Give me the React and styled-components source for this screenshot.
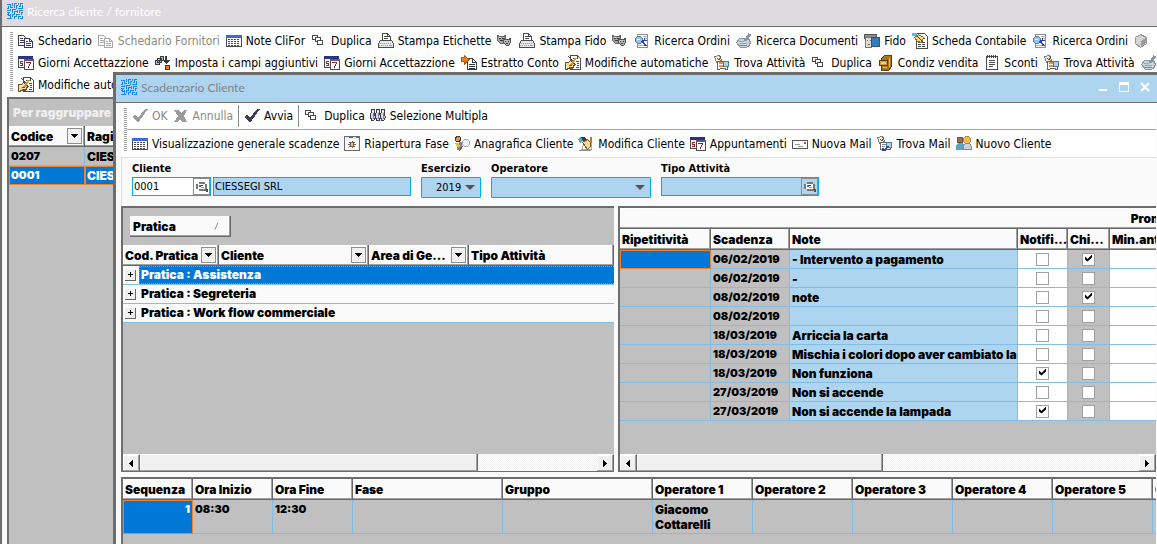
import React from "react";
import styled, { createGlobalStyle } from "styled-components";

const ui = `"DejaVu Sans Condensed", "DejaVu Sans", sans-serif`;
const titleFont = `400 12px Lato, "Open Sans", sans-serif`;
const gridFont = `900 12px/15px Inter, sans-serif`;

const shapes = {
  logo: (
    <path
      stroke="#1688e6"
      d="M0 1.5h4M5.5 0v3M1.5 3v3M0 5.5h2M3.5 1v4M3 4.5h3M7.5 1v4M7 .5h3M9.5 2v4M9 2.5h2M11.5 0v2M13 .5h3M13.5 0v4M12 3.5h2M15.5 2v4M11 5.5h5M0 7.5h4M3.5 6v2M5.5 6v4M5 6.5h4M7.5 8v3M7 8.5h4M10.5 7v3M12 7.5h4M12.5 7v3M14.5 9v3M14 9.5h2M0 9.5h3M1.5 9v4M1 12.5h3M3.5 11v4M0 15.5h5M5.5 11v3M5 11.5h3M7.5 13v3M7 13.5h3M9.5 11v3M9 11.5h4M11.5 13v3M11 13.5h3M13 15.5h3M15.5 13v3M0 11.5h1"
    />
  ),
  copy: (
    <>
      <path fill="#fff" stroke="#3c3c3c" d="M.5 2.5h5l3 3v7h-8z" />
      <path stroke="#3c3c3c" d="M2 5.5h3M2 7.5h4M2 9.5h4" />
      <path fill="#fff" stroke="#34347a" d="M6.5 5.5h5l3 3v6h-8z" />
      <path stroke="#34347a" d="M11.5 5v3M11 8.5h4M8 8.5h2M8 10.5h5M8 12.5h5" />
    </>
  ),
  copyOff: (
    <>
      <path fill="#fff" stroke="#a8a8a8" d="M.5 2.5h5l3 3v7h-8z" />
      <path stroke="#a8a8a8" d="M2 5.5h3M2 7.5h4M2 9.5h4" />
      <path fill="#fff" stroke="#a8a8a8" d="M6.5 5.5h5l3 3v6h-8z" />
      <path stroke="#a8a8a8" d="M11.5 5v3M11 8.5h4M8 8.5h2M8 10.5h5M8 12.5h5" />
    </>
  ),
  table: (
    <>
      <path fill="#fff" stroke="#4a4a4a" d="M.5 3.5h15v10h-15z" />
      <path fill="#3f68d8" d="M0 2h16v3H0z" />
      <path
        stroke="#4a4a4a"
        strokeDasharray="2 1"
        d="M2 6.5h12M2 8.5h12M2 10.5h12M2 12.5h12"
      />
    </>
  ),
  dup: (
    <>
      <path fill="#fff" stroke="#4a4a4a" d="M1.5 2.5h5v4h-5z" />
      <path fill="#fff" stroke="#4a4a4a" d="M4.5 4.5h5v4h-5z" />
      <path fill="#fff" stroke="#4a4a4a" d="M6.5 7.5h5v4h-5z" />
    </>
  ),
  printer: (
    <>
      <path fill="#fff" stroke="#4a4a4a" d="M4.5 7.5v-7h5l3 3v4z" />
      <path stroke="#4a4a4a" d="M6 3.5h3M6 5.5h4M9.5 1v3M9 3.5h3" />
      <path fill="#e8e8e8" stroke="#4a4a4a" d="M2.5 7.5h11l2 3v4H.5v-4z" />
      <path stroke="#9a9a9a" strokeDasharray="1 1" d="M2 10.5h12M1 12.5h11" />
      <path stroke="#f08a3c" d="M12 12.5h2" />
      <path stroke="#4a4a4a" d="M0 14.5h16" />
    </>
  ),
  masks: (
    <>
      <path fill="#a2a2a2" stroke="#6a6a6a" d="M.5 2.5l2 1h4l2-1v6l-2 2h-3l-3-3z" />
      <path fill="#b4b4b4" stroke="#555" d="M6.5 5.5l2 1h3l2-1v4l-2 3h-2l-3-3z" />
      <path stroke="#3a3a3a" d="M2 5.5h2M5 5.5h1M3 7.5h3M8 8.5h1M11 8.5h1M9 10.5h2" />
      <path stroke="#ddd" d="M2 4.5h2M8 7.5h1" />
    </>
  ),
  search: (
    <>
      <path fill="#fff" stroke="#8e8e8e" d="M3.5 1.5h10v13h-10z" />
      <path stroke="#b0b0b0" d="M9 3.5h4M10 5.5h3M4 12.5h6" />
      <circle cx="5" cy="7" r="3.5" fill="#8fc5ea" stroke="#6b7b88" />
      <path stroke="#2d3fa8" strokeWidth="2" d="M8 8l4 5" />
      <path stroke="#2d3fa8" d="M8 7.5h5M10.5 5v3" />
      <path stroke="#fff" d="M3 6.5h3" />
    </>
  ),
  scan: (
    <>
      <path fill="#c9d3da" stroke="#8b959c" d="M.5 9.5l3-4h9l2 4-2 4-3 1h-5z" />
      <path stroke="#8497a5" strokeWidth="3" d="M9 8l5-7" />
      <path stroke="#7ab0d4" d="M4 10.5h7M3 8.5h5" />
      <path stroke="#80888e" d="M3 12.5h8" />
    </>
  ),
  wallet: (
    <>
      <path fill="#8c8c8c" stroke="#555" d="M.5 1.5h12v4h-12z" />
      <path fill="#e2ddd0" stroke="#777" d="M1.5 4.5h6v10h-6z" />
      <path stroke="#5a6c78" d="M3 7.5h1M6 7.5h1M4 11.5h2" />
      <path fill="#3679b8" stroke="#28557f" d="M7.5 4.5h8v9h-8z" />
    </>
  ),
  sheet: (
    <>
      <path fill="#fff" stroke="#4a4a4a" d="M4.5.5h8l3 3v12h-11z" />
      <path
        stroke="#4a4a4a"
        strokeDasharray="3 1"
        d="M10 5.5h4M6 9.5h8M6 11.5h8M6 13.5h8"
      />
      <path fill="#58b9e8" d="M0 0h5v3H0z" />
      <path fill="#f4d78e" stroke="#8b6f31" d="M2.5 4.5l4-3 5 3-2 5-4-1z" />
      <path stroke="#4a4a4a" d="M5 3l6 6" />
    </>
  ),
  cube: (
    <>
      <path fill="#d3d3d3" stroke="#999" d="M6.5 1.5l6 3v6l-6 4-5-4v-6z" />
      <path fill="#9b9b9b" d="M7 8l5-3v5l-5 4z" />
    </>
  ),
  calendar: (
    <>
      <path fill="#f5f5f5" stroke="#4a4a4a" d="M.5 1.5h14v11H.5z" />
      <path fill="#2c3180" d="M0 1h15v3H0z" />
      <path stroke="#a02828" d="M2 6.5h3M2 8.5h3M2 10.5h3M2.5 6v3M4.5 8v3" />
      <path fill="#fff" stroke="#4a4a4a" d="M6.5 4.5h9v10h-9z" />
      <path fill="#5a5c78" d="M6 4h10v2H6z" />
      <path stroke="#922424" d="M8 7.5h5M12.5 7v2M11.5 9v2M10.5 11v2" />
    </>
  ),
  fields: (
    <>
      <path fill="#8ad2f5" stroke="#3a3a3a" d="M.5 5.5h4v4h-4zM2.5 3.5h4v4h-4zM5.5 1.5h3v4h-3z" />
      <path fill="#3a3a3a" d="M10 1h2v4h3l-4 4-4-4h3z" />
      <path fill="#f07a22" stroke="#3a3a3a" d="M10.5 10.5h4v4h-4z" />
    </>
  ),
  exportDoc: (
    <>
      <path fill="#fff" stroke="#3c3c3c" d="M6.5 3.5h5l4 4v7h-9z" />
      <path stroke="#3c3c3c" d="M11.5 4v4M11 7.5h4M8 9.5h6M8 11.5h6M8 13.5h6" />
      <path fill="#f58220" stroke="#a85b22" d="M0 2.5h3v-2l5 4-5 5v-3H0z" />
    </>
  ),
  edit: (
    <>
      <path fill="#fff" stroke="#4a4a4a" d="M5.5.5h7l3 3v11h-10z" />
      <path stroke="#4a4a4a" d="M12.5 1v3M8 3.5h2M11 6.5h3M12 8.5h2M12 10.5h2M11 12.5h3M3 1l8 9" />
      <path fill="#f6dfa4" stroke="#675325" d="M.5 7.5h3l2-2 3 2 1 2-2 4h-3l-4 1z" />
      <path stroke="#d89a3a" strokeWidth="2" d="M11 3l-5 7" />
      <path stroke="#675325" d="M4 10.5h3M4 12.5h3" />
    </>
  ),
  findTask: (
    <>
      <path fill="#f8f0d8" stroke="#7b7b7b" d="M.5 1.5l5-1 2 5-5 2z" />
      <path stroke="#555" d="M3 3l2 2 2-4" />
      <path fill="#fff" stroke="#666" d="M3.5 6.5h10v8l-4-1-6 1z" />
      <path stroke="#f08a3c" strokeWidth="2" d="M5 8h4M5 11h5" />
      <circle cx="12" cy="9" r="3" fill="#a5d5ef" stroke="#56788c" />
    </>
  ),
  cabinet: (
    <>
      <path fill="#a9741d" stroke="#5d4011" d="M3.5 3.5l3-3h7v11l-3 4h-7z" />
      <path fill="#d29a35" stroke="#5d4011" d="M1.5 5.5h8v5h-8z" />
      <path fill="#f1cf7d" d="M3 7h5v2H3z" />
      <path stroke="#e3bd6c" d="M5 12.5h4M11.5 3v9" />
    </>
  ),
  notepad: (
    <>
      <path fill="#fff" stroke="#4a4a4a" d="M2.5 1.5h11v13h-11z" />
      <path stroke="#4a4a4a" strokeDasharray="1 1" d="M3 .5h10M3 2.5h10" />
      <path stroke="#4a4a4a" d="M5 5.5h6M5 7.5h6M5 9.5h6M5 11.5h4" />
    </>
  ),
  okOff: <path fill="#9c9c9c" d="M0 9l3-2 3 3 7-9h3L6 15z" />,
  cancelOff: (
    <path fill="#9c9c9c" d="M1 2h5l2 3 3-3h3l-3 6 3 6h-5l-2-3-3 3H1l4-6z" />
  ),
  go: (
    <>
      <path fill="#3e3e4e" d="M0 9l3-2 3 3 7-9h3L6 15z" />
      <path stroke="#34347a" d="M4 12l2 2 5-7" />
    </>
  ),
  people: (
    <>
      <path fill="#d6d6dc" stroke="#3c3c50" d="M1.5 1.5h3v4l1 4-2 3h-2l-1-4zM6.5 1.5h3v4l1 3-1 4h-3l-1-4zM11.5 1.5h3v4l1 4-2 3h-2l-1-4z" />
      <path stroke="#8080b0" d="M3.5 5v6M8.5 5v6M13.5 5v6" />
      <path stroke="#fff" d="M2 3.5h2M7 3.5h2M12 3.5h2" />
    </>
  ),
  gearWindow: (
    <>
      <path fill="#fafafa" stroke="#6a6a6a" d="M.5.5h15v14H.5z" />
      <path fill="#e4edf8" d="M1 1h14v2H1z" />
      <path stroke="#356bd8" d="M5 1.5h4M12 1.5h3" />
      <path fill="#e6c98c" stroke="#6b6258" d="M6.5 6.5h3v4h-3z" />
      <path stroke="#6b6258" d="M8 5v1M8 11v1M4 8.5h2M10 8.5h2M5 6.5h1M10 6.5h1M5 10.5h1M10 10.5h1" />
    </>
  ),
  person: (
    <>
      <circle cx="4" cy="3" r="2.5" fill="#d79a5b" stroke="#4a3b34" />
      <path fill="#e4c33f" d="M1 7h5l2 4-4 1z" />
      <path fill="#7d80b0" d="M5 6h3v5H6zM3 11h4v3H3z" />
      <circle cx="12" cy="7" r="3.5" fill="#f0f3f5" stroke="#a7a7a7" />
      <path stroke="#7e4a2f" d="M9 10l-4 5" />
    </>
  ),
  editClient: (
    <>
      <path fill="#fff" stroke="#aaa" d="M6.5 5.5h7v8H4z" />
      <path fill="#3a3a3a" d="M2 1h4l3 3-4 2z" />
      <path fill="#46a9c8" d="M0 3l3-2 2 4-3 2z" />
      <path fill="#f4d99c" stroke="#725729" d="M4.5 6.5l5-3 3 3v4l-3 3z" />
      <path stroke="#c0762c" strokeWidth="2" d="M13 1v6" />
      <path stroke="#8a8a8a" d="M1 14.5h12" />
    </>
  ),
  mail: (
    <>
      <path fill="#fff" stroke="#555" d="M.5 4.5h15v8H.5z" />
      <path stroke="#999" d="M3 8.5h5M6 10.5h5" />
      <path fill="#d84a2c" d="M12 6h2v2h-2z" />
    </>
  ),
  findMail: (
    <>
      <path fill="#f8f0d8" stroke="#7b7b7b" d="M.5 1.5l5-1 2 5-5 2z" />
      <path stroke="#555" d="M3 3l2 2 2-4" />
      <path fill="#fff" stroke="#666" d="M3.5 6.5h10v7h-10z" />
      <path stroke="#888" d="M5 8.5h5M5 10.5h3" />
      <circle cx="12" cy="9" r="3" fill="#a5d5ef" stroke="#56788c" />
      <path stroke="#3443a8" strokeWidth="2" d="M11 10l-4 5M6 12v3" />
    </>
  ),
  clients: (
    <>
      <circle cx="4" cy="4" r="3" fill="#a8693f" stroke="#6f5545" />
      <path fill="#59a3c9" d="M0 14V9l3-2h4l2 3v4z" />
      <circle cx="11" cy="4" r="3.5" fill="#f0b65a" stroke="#b9833f" />
      <path fill="#c8d2d8" stroke="#7d8c96" d="M7.5 13.5v-4l2-2h4l2 3v3z" />
    </>
  ),
  lens: (
    <>
      <path fill="#fff" d="M3 4h7v5H3z" />
      <path stroke="#777" strokeWidth="2" d="M4 3h6M4 10h7M2 4v5M11 4v5" />
      <path fill="#2b78b8" d="M4 5h2v2H4z" />
      <path fill="#3b3b3b" d="M6 5h2v1H6z" />
      <path fill="#c79655" d="M6 7h3v1H6z" />
      <path fill="#5b4b42" d="M11 9h2v3h-2z" />
    </>
  ),
};

function Icon({ name, size = 16 }) {
  return (
    <IconSvg
      width={size}
      height={size}
      viewBox={`0 0 ${size} ${size}`}
      fill="none"
      shapeRendering="crispEdges"
      aria-hidden="true"
    >
      {shapes[name]}
    </IconSvg>
  );
}

const mainTools = [
  [
    ["copy", "Schedario"],
    ["copyOff", "Schedario Fornitori", true],
    ["table", "Note CliFor"],
    ["dup", "Duplica"],
    ["printer", "Stampa Etichette"],
    ["masks"],
    ["printer", "Stampa Fido"],
    ["masks"],
    ["search", "Ricerca Ordini"],
    ["scan", "Ricerca Documenti"],
    ["wallet", "Fido"],
    ["sheet", "Scheda Contabile"],
    ["search", "Ricerca Ordini"],
    ["cube"],
  ],
  [
    ["calendar", "Giorni Accettazzione"],
    ["fields", "Imposta i campi aggiuntivi"],
    ["calendar", "Giorni Accettazzione"],
    ["exportDoc", "Estratto Conto"],
    ["edit", "Modifiche automatiche"],
    ["findTask", "Trova Attività"],
    ["dup", "Duplica"],
    ["cabinet", "Condiz vendita"],
    ["notepad", "Sconti"],
    ["findTask", "Trova Attività"],
    ["scan"],
  ],
  [["edit", "Modifiche automatiche"]],
];

const clientTools = [
  ["table", "Visualizzazione generale scadenze"],
  ["gearWindow", "Riapertura Fase"],
  ["person", "Anagrafica Cliente"],
  ["editClient", "Modifica Cliente"],
  ["calendar", "Appuntamenti"],
  ["mail", "Nuova Mail"],
  ["findMail", "Trova Mail"],
  ["clients", "Nuovo Cliente"],
];

const deadlines = [
  ["06/02/2019", "- Intervento a pagamento", false, true],
  ["06/02/2019", "-", false, false],
  ["08/02/2019", "note", false, true],
  ["08/02/2019", "", false, false],
  ["18/03/2019", "Arriccia la carta", false, false],
  ["18/03/2019", "Mischia i colori dopo aver cambiato la", false, false],
  ["18/03/2019", "Non funziona", true, false],
  ["27/03/2019", "Non si accende", false, false],
  ["27/03/2019", "Non si accende la lampada", true, false],
];

const groups = ["Assistenza", "Segreteria", "Work flow commerciale"];

function Tool({ icon, label, off }) {
  return (
    <ToolButton type="button" disabled={off} aria-label={label || icon}>
      <Icon name={icon} />
      {label}
    </ToolButton>
  );
}

function Head({ children, filter }) {
  return (
    <HeadCell>
      <HeadInner>
        <span>{children}</span>
        {filter && (
          <FilterButton type="button" aria-label={`Filtra ${children}`}>
            <svg width="7" height="4" viewBox="0 0 7 4" shapeRendering="crispEdges">
              <path d="M0 0h7L3.5 4z" />
            </svg>
          </FilterButton>
        )}
      </HeadInner>
    </HeadCell>
  );
}

function Cols({ widths }) {
  return (
    <colgroup>
      {widths.map((w, i) => (
        <col key={i} width={w || undefined} />
      ))}
    </colgroup>
  );
}

function ScrollBar({ size }) {
  return (
    <ScrollTrack>
      <ArrowButton type="button" aria-label="Scorri a sinistra">
        <svg width="4" height="7" viewBox="0 0 4 7" shapeRendering="crispEdges">
          <path d="M4 0v7L0 3.5z" />
        </svg>
      </ArrowButton>
      <ScrollRail>
        <ScrollThumb $size={size} />
      </ScrollRail>
      <ArrowButton type="button" aria-label="Scorri a destra">
        <svg width="4" height="7" viewBox="0 0 4 7" shapeRendering="crispEdges">
          <path d="M0 0v7l4-3.5z" />
        </svg>
      </ArrowButton>
    </ScrollTrack>
  );
}

function ClientsGrid() {
  return (
    <ClientsPanel>
      <GroupHint>Per raggruppare trascinare qui</GroupHint>
      <Table $width="320px">
        <Cols widths={[76, 244]} />
        <thead>
          <tr>
            <Head filter>Codice</Head>
            <Head>Ragione Sociale</Head>
          </tr>
        </thead>
        <tbody>
          <tr>
            <Cell $digits>0207</Cell>
            <Cell>CIESSEGI</Cell>
          </tr>
          <tr>
            <Cell $selected $digits>
              0001
            </Cell>
            <Cell $selected>CIESSEGI SRL</Cell>
          </tr>
        </tbody>
      </Table>
    </ClientsPanel>
  );
}

function PracticeGrid() {
  return (
    <Panel>
      <GroupArea>
        <GroupChip type="button">
          Pratica
          <svg width="8" height="8" viewBox="0 0 8 8" fill="none">
            <path stroke="#8a8a8a" d="M1 7.5L4 .5" />
            <path stroke="#fff" d="M4 .5l3 7H2" />
          </svg>
        </GroupChip>
      </GroupArea>
      <Table>
        <Cols widths={[96, 150, 100, null]} />
        <thead>
          <tr>
            <Head filter>Cod. Pratica</Head>
            <Head filter>Cliente</Head>
            <Head filter>Area di Ge...</Head>
            <Head>Tipo Attività</Head>
          </tr>
        </thead>
        <tbody>
          {groups.map((g, i) => (
            <tr key={g}>
              <GroupCell colSpan={4}>
                <GroupRow>
                  <Expander type="button" aria-label={`Espandi ${g}`}>
                    <svg width="5" height="5" viewBox="0 0 5 5" shapeRendering="crispEdges">
                      <path stroke="#000" d="M0 2.5h5M2.5 0v5" />
                    </svg>
                  </Expander>
                  <GroupName $active={i === 0}>Pratica : {g}</GroupName>
                </GroupRow>
              </GroupCell>
            </tr>
          ))}
        </tbody>
      </Table>
      <Filler />
      <ScrollBar size="74%" />
    </Panel>
  );
}

function DeadlineGrid() {
  return (
    <Panel>
      <Table $width="1096px">
        <Cols widths={[91, 79, 228, 50, 42, null]} />
        <thead>
          <tr>
            <HeadCell colSpan={6} $center>
              Promemoria
            </HeadCell>
          </tr>
          <tr>
            <Head>Ripetitività</Head>
            <Head>Scadenza</Head>
            <Head>Note</Head>
            <Head>Notifi...</Head>
            <Head>Chi...</Head>
            <Head>Min.anticipo</Head>
          </tr>
        </thead>
        <tbody>
          {deadlines.map(([date, note, notify, closed], i) => (
            <tr key={i}>
              <Cell $selected={i === 0} />
              <Cell $digits>{date}</Cell>
              <Cell $bg="#aed5ef">{note}</Cell>
              <Cell $bg="#fff" $center>
                <Check type="checkbox" defaultChecked={notify} aria-label="Notifica" />
              </Cell>
              <Cell $center>
                <Check type="checkbox" defaultChecked={closed} aria-label="Chiusa" />
              </Cell>
              <Cell $bg="#fff" />
            </tr>
          ))}
        </tbody>
      </Table>
      <Filler />
      <ScrollBar size="49%" />
    </Panel>
  );
}

function PhaseGrid() {
  return (
    <PhasePanel>
      <Table $width="1130px">
        <Cols widths={[70, 80, 80, 150, 150, 100, 100, 100, 100, 100, 100]} />
        <thead>
          <tr>
            <Head>Sequenza</Head>
            <Head>Ora Inizio</Head>
            <Head>Ora Fine</Head>
            <Head>Fase</Head>
            <Head>Gruppo</Head>
            {[1, 2, 3, 4, 5, 6].map((n) => (
              <Head key={n}>{`Operatore ${n}`}</Head>
            ))}
          </tr>
        </thead>
        <tbody>
          <tr>
            <Cell $tall $selected $right $digits>
              1
            </Cell>
            <Cell $tall $digits>
              08:30
            </Cell>
            <Cell $tall $digits>
              12:30
            </Cell>
            <Cell $tall />
            <Cell $tall />
            <Cell $tall>Giacomo Cottarelli</Cell>
            <Cell $tall />
            <Cell $tall />
            <Cell $tall />
            <Cell $tall />
            <Cell $tall />
          </tr>
        </tbody>
      </Table>
    </PhasePanel>
  );
}

function FilterForm() {
  return (
    <Form>
      <Field $width="279px">
        <label htmlFor="cliente">Cliente</label>
        <FieldRow>
          <InputBox $width="79px" $white>
            <input id="cliente" defaultValue="0001" />
            <LensButton type="button" aria-label="Cerca cliente">
              <Icon name="lens" size={14} />
            </LensButton>
          </InputBox>
          <InputBox $width="198px">
            <input defaultValue="CIESSEGI SRL" aria-label="Ragione sociale" />
          </InputBox>
        </FieldRow>
      </Field>
      <Field $width="60px">
        <label htmlFor="esercizio">Esercizio</label>
        <SelectBox>
          <select id="esercizio" defaultValue="2019">
            <option>2019</option>
          </select>
          <SelectArrow viewBox="0 0 10 5">
            <path d="M0 0h10L5 5z" />
          </SelectArrow>
        </SelectBox>
      </Field>
      <Field $width="160px">
        <label htmlFor="operatore">Operatore</label>
        <SelectBox>
          <select id="operatore" defaultValue="">
            <option value=""></option>
          </select>
          <SelectArrow viewBox="0 0 10 5">
            <path d="M0 0h10L5 5z" />
          </SelectArrow>
        </SelectBox>
      </Field>
      <Field $width="158px">
        <label htmlFor="tipo">Tipo Attività</label>
        <FieldRow>
          <InputBox $width="158px">
            <input id="tipo" />
            <LensButton type="button" aria-label="Cerca tipo attività">
              <Icon name="lens" size={14} />
            </LensButton>
          </InputBox>
        </FieldRow>
      </Field>
    </Form>
  );
}

function App() {
  return (
    <Desktop>
      <Global />
      <TitleBar>
        <Icon name="logo" />
        <h1>Ricerca cliente / fornitore</h1>
      </TitleBar>
      <ToolArea>
        <Grip />
        <ToolRows>
          {mainTools.map((row, r) => (
            <ToolRow key={r}>
              {row.map(([icon, label, off], i) => (
                <Tool key={i} icon={icon} label={label} off={off} />
              ))}
            </ToolRow>
          ))}
        </ToolRows>
      </ToolArea>
      <ClientsGrid />

      <Dialog>
        <DialogTitle>
          <Icon name="logo" />
          <h2>Scadenzario Cliente</h2>
          <WindowButton type="button" aria-label="Riduci">
            <svg width="10" height="10" shapeRendering="crispEdges">
              <path fill="#fff" d="M1 7h8v2H1z" />
            </svg>
          </WindowButton>
          <WindowButton type="button" aria-label="Ingrandisci">
            <svg width="10" height="10" shapeRendering="crispEdges">
              <path fill="#fff" fillRule="evenodd" d="M0 0h10v10H0zM1 3v6h8V3z" />
            </svg>
          </WindowButton>
          <WindowButton type="button" aria-label="Chiudi">
            <svg width="10" height="10">
              <path stroke="#fff" strokeWidth="2" d="M1 1l8 8M9 1L1 9" />
            </svg>
          </WindowButton>
        </DialogTitle>
        <DialogBody>
          <DialogTools>
            <Grip />
            <ToolRows>
              <ToolRow $tall $line>
                <Tool icon="okOff" label="OK" off />
                <Tool icon="cancelOff" label="Annulla" off />
                <Divider />
                <Tool icon="go" label="Avvia" />
                <Divider />
                <Tool icon="dup" label="Duplica" />
                <Tool icon="people" label="Selezione Multipla" />
              </ToolRow>
              <ToolRow $tall>
                {clientTools.map(([icon, label]) => (
                  <Tool key={label} icon={icon} label={label} />
                ))}
              </ToolRow>
            </ToolRows>
          </DialogTools>
          <FilterForm />
          <Split>
            <PracticeGrid />
            <DeadlineGrid />
          </Split>
          <PhaseGrid />
        </DialogBody>
      </Dialog>
    </Desktop>
  );
}

export default App;

const Global = createGlobalStyle`
  * {
    box-sizing: border-box;
  }
  body {
    margin: 0;
    overflow: hidden;
    font-family: ${ui};
    font-size: 12px;
    color: #000;
  }
  button, input, select {
    font: inherit;
    color: inherit;
    margin: 0;
    padding: 0;
    border: 0;
    background: none;
    border-radius: 0;
    outline: none;
  }
`;

const IconSvg = styled.svg`
  display: block;
  flex: none;
`;

const Desktop = styled.div`
  position: relative;
  display: flex;
  flex-direction: column;
  height: 100vh;
  overflow: hidden;
  background: #fafafa;
  border-left: 2px solid #6d6d6d;
`;

const TitleBar = styled.header`
  display: flex;
  align-items: center;
  gap: 4px;
  flex: none;
  height: 27px;
  padding: 0 5px 4px;
  background: #dedadd;
  border-bottom: 1px solid #6d6d6d;

  h1 {
    margin: 0;
    font: ${titleFont};
    color: #fff;
  }
`;

const ToolArea = styled.div`
  display: flex;
  flex: none;
  margin: 1px 0 0 5px;
  padding: 2px 0 1px 3px;
  background: #fff;
  border-radius: 3px 0 0 3px;
`;

const Grip = styled.div`
  flex: none;
  width: 3px;
  margin: 2px 0 4px;
  background: repeating-linear-gradient(#a0a0a0 0 1px, #fff 1px 2px);
`;

const ToolRows = styled.div`
  flex: 1;
  min-width: 0;
`;

const ToolRow = styled.div`
  display: flex;
  align-items: center;
  gap: ${(p) => (p.$tall ? "5px" : "6px")};
  height: ${(p) => (p.$tall ? "27px" : "22px")};
  padding-left: 5px;
  overflow: hidden;
  border-bottom: ${(p) => (p.$line ? "1px solid #a0a0a0" : "0")};
`;

const ToolButton = styled.button`
  display: flex;
  align-items: center;
  flex: none;
  gap: 4px;
  height: 20px;
  white-space: nowrap;

  &:disabled {
    color: #8a8a80;
  }
`;

const Divider = styled.span`
  width: 1px;
  height: 22px;
  background: #8a8a8a;
`;

const ClientsPanel = styled.section`
  flex: 1;
  margin-left: 5px;
  overflow: hidden;
  background: #c0c0c0;
  border-top: 2px solid #6d6d6d;
  border-left: 2px solid #6d6d6d;
`;

const GroupHint = styled.p`
  margin: 0;
  padding-left: 4px;
  height: 27px;
  font: ${gridFont};
  line-height: 28px;
  color: #efefef;
  white-space: nowrap;
`;

const Dialog = styled.section`
  position: absolute;
  top: 72px;
  left: 111px;
  right: 0;
  bottom: 0;
  display: flex;
  flex-direction: column;
  background: #fafafa;
  border-top: 3px solid #6d6d6d;
  border-left: 3px solid #6d6d6d;
`;

const DialogTitle = styled.header`
  display: flex;
  align-items: center;
  flex: none;
  height: 28px;
  padding: 0 7px 3px 5px;
  background: #aed5ef;
  border-bottom: 1px solid #6d6d6d;

  h2 {
    flex: 1;
    margin: 0 0 0 4px;
    font: ${titleFont};
    color: #7d8388;
  }
`;

const WindowButton = styled.button`
  display: flex;
  margin-left: 11px;
`;

const DialogBody = styled.div`
  display: flex;
  flex-direction: column;
  flex: 1;
  min-height: 0;
  padding: 0 1px 0 5px;
`;

const DialogTools = styled.div`
  display: flex;
  flex: none;
  padding-left: 3px;
  background: #fff;
  border-bottom: 1px solid #dcdcdc;

  ${Grip} {
    margin: 5px 0;
  }
`;

const Form = styled.form`
  display: flex;
  flex: none;
  gap: 10px;
  height: 48px;
  padding: 4px 10px 0;
  border-left: 1px solid #dcdcdc;
`;

const Field = styled.div`
  display: flex;
  flex-direction: column;
  width: ${(p) => p.$width};

  label {
    height: 15px;
    font-size: 11px;
    font-weight: 700;
    line-height: 13px;
  }
`;

const FieldRow = styled.div`
  display: flex;
  gap: 2px;
`;

const InputBox = styled.div`
  display: flex;
  width: ${(p) => p.$width};
  height: 19px;
  background: ${(p) => (p.$white ? "#fff" : "#aed5ef")};
  border: 1px solid #00aeef;

  input {
    flex: 1;
    min-width: 0;
    padding-left: 1px;
    font-size: 11px;
  }
`;

const LensButton = styled.button`
  display: flex;
  align-items: center;
  justify-content: center;
  width: 17px;
  border: 1px solid #8e8e8e;
`;

const SelectBox = styled.div`
  position: relative;

  select {
    appearance: none;
    display: block;
    width: 100%;
    height: 21px;
    padding-left: 14px;
    font-size: 11px;
    background: #aed5ef;
    border: 1px solid #00aeef;
    border-radius: 1px;
  }
`;

const SelectArrow = styled.svg`
  position: absolute;
  top: 8px;
  right: 6px;
  width: 10px;
  height: 5px;
  fill: #555;
  pointer-events: none;
`;

const Split = styled.div`
  display: grid;
  grid-template-columns: 493px 1fr;
  gap: 4px;
  flex: 1;
  min-height: 0;
`;

const Panel = styled.section`
  display: flex;
  flex-direction: column;
  min-width: 0;
  overflow: hidden;
  background: #c0c0c0;
  border: solid #6d6d6d;
  border-width: 2px 0 1px 2px;
`;

const PhasePanel = styled(Panel)`
  flex: none;
  height: 67px;
  margin-top: 5px;
  border-bottom: 0;
`;

const GroupArea = styled.div`
  flex: none;
  height: 37px;
  padding: 8px 7px;
`;

const GroupChip = styled.button`
  display: flex;
  align-items: center;
  justify-content: space-between;
  width: 101px;
  height: 21px;
  padding: 0 8px 0 3px;
  font: ${gridFont};
  background: #fafafa;
  border-right: 1px solid #696969;
  border-bottom: 1px solid #696969;
  box-shadow: inset -1px -1px #a0a0a0;
`;

const Table = styled.table`
  flex: none;
  width: ${(p) => p.$width || "100%"};
  table-layout: fixed;
  border-spacing: 0;
  font: ${gridFont};
`;

const HeadCell = styled.th`
  height: 21px;
  padding: 0 2px;
  overflow: hidden;
  text-align: ${(p) => (p.$center ? "center" : "left")};
  font-weight: inherit;
  white-space: nowrap;
  background: #fafafa;
  border-right: 1px solid #696969;
  border-bottom: 1px solid #696969;
  box-shadow: inset -1px -1px #a0a0a0, inset 1px 1px #fff;
`;

const HeadInner = styled.div`
  display: flex;
  align-items: center;
  justify-content: space-between;
  height: 19px;
`;

const FilterButton = styled.button`
  display: flex;
  align-items: center;
  justify-content: center;
  flex: none;
  width: 15px;
  height: 16px;
  background: #f0f0f0;
  border: 1px solid #8e8e8e;
`;

const Cell = styled.td`
  height: ${(p) => (p.$tall ? "34px" : "19px")};
  padding: ${(p) => (p.$tall ? "2px 2px 1px" : "0 2px")};
  overflow: hidden;
  vertical-align: ${(p) => (p.$tall ? "top" : "middle")};
  text-align: ${(p) => (p.$center ? "center" : p.$right ? "right" : "left")};
  white-space: ${(p) => (p.$tall ? "normal" : "nowrap")};
  font-size: ${(p) => (p.$digits ? "11px" : "12px")};
  color: ${(p) => (p.$selected ? "#fff" : "#000")};
  background: ${(p) => (p.$selected ? "#0078d7" : p.$bg || "transparent")};
  border-right: 1px solid #83bde6;
  border-bottom: 1px solid #83bde6;
  outline: ${(p) => (p.$selected ? "1px solid #f0822d" : "0")};
  outline-offset: -1px;
`;

const GroupCell = styled.td`
  height: 19px;
  padding: 0;
  background: #fafafa;
  border-bottom: 1px solid #83bde6;
`;

const GroupRow = styled.div`
  display: flex;
  align-items: center;
  gap: 3px;
  padding-left: 2px;
`;

const Expander = styled.button`
  display: flex;
  align-items: center;
  justify-content: center;
  width: 11px;
  height: 11px;
  background: #f0f0f0;
  border-right: 1px solid #696969;
  border-bottom: 1px solid #696969;
`;

const GroupName = styled.span`
  flex: 1;
  padding-left: 1px;
  line-height: 16px;
  color: ${(p) => (p.$active ? "#fff" : "#000")};
  background: ${(p) => (p.$active ? "#0078d7" : "transparent")};
  border: dotted ${(p) => (p.$active ? "#f0822d" : "transparent")};
  border-width: 1px 0 1px 1px;
`;

const Check = styled.input`
  appearance: none;
  display: block;
  width: 13px;
  height: 13px;
  margin: 0 auto;
  padding: 1px 2px;
  background: #fff;
  border: 1px solid #a0a0a0;

  &:checked::before {
    content: "";
    display: block;
    width: 7px;
    height: 7px;
    background: #000;
    clip-path: polygon(0 28%, 36% 64%, 100% 0, 100% 43%, 36% 100%, 0 71%);
  }
`;

const Filler = styled.div`
  flex: 1;
`;

const ScrollTrack = styled.div`
  display: flex;
  flex: none;
  height: 17px;
`;

const ArrowButton = styled.button`
  display: flex;
  align-items: center;
  justify-content: center;
  flex: none;
  width: 17px;
  background: #f0f0f0;
  border-right: 1px solid #696969;
  border-top: 1px solid #fff;
  box-shadow: inset -1px -1px #a0a0a0, inset 1px 1px #fff;
`;

const ScrollRail = styled.div`
  flex: 1;
  background: repeating-conic-gradient(#fff 0 25%, #f0f0f0 0 50%) 0 0 / 2px 2px;
`;

const ScrollThumb = styled.div`
  width: ${(p) => p.$size};
  height: 100%;
  background: #f0f0f0;
  border-right: 1px solid #696969;
  box-shadow: inset -1px -1px #a0a0a0, inset 1px 1px #fff;
`;
